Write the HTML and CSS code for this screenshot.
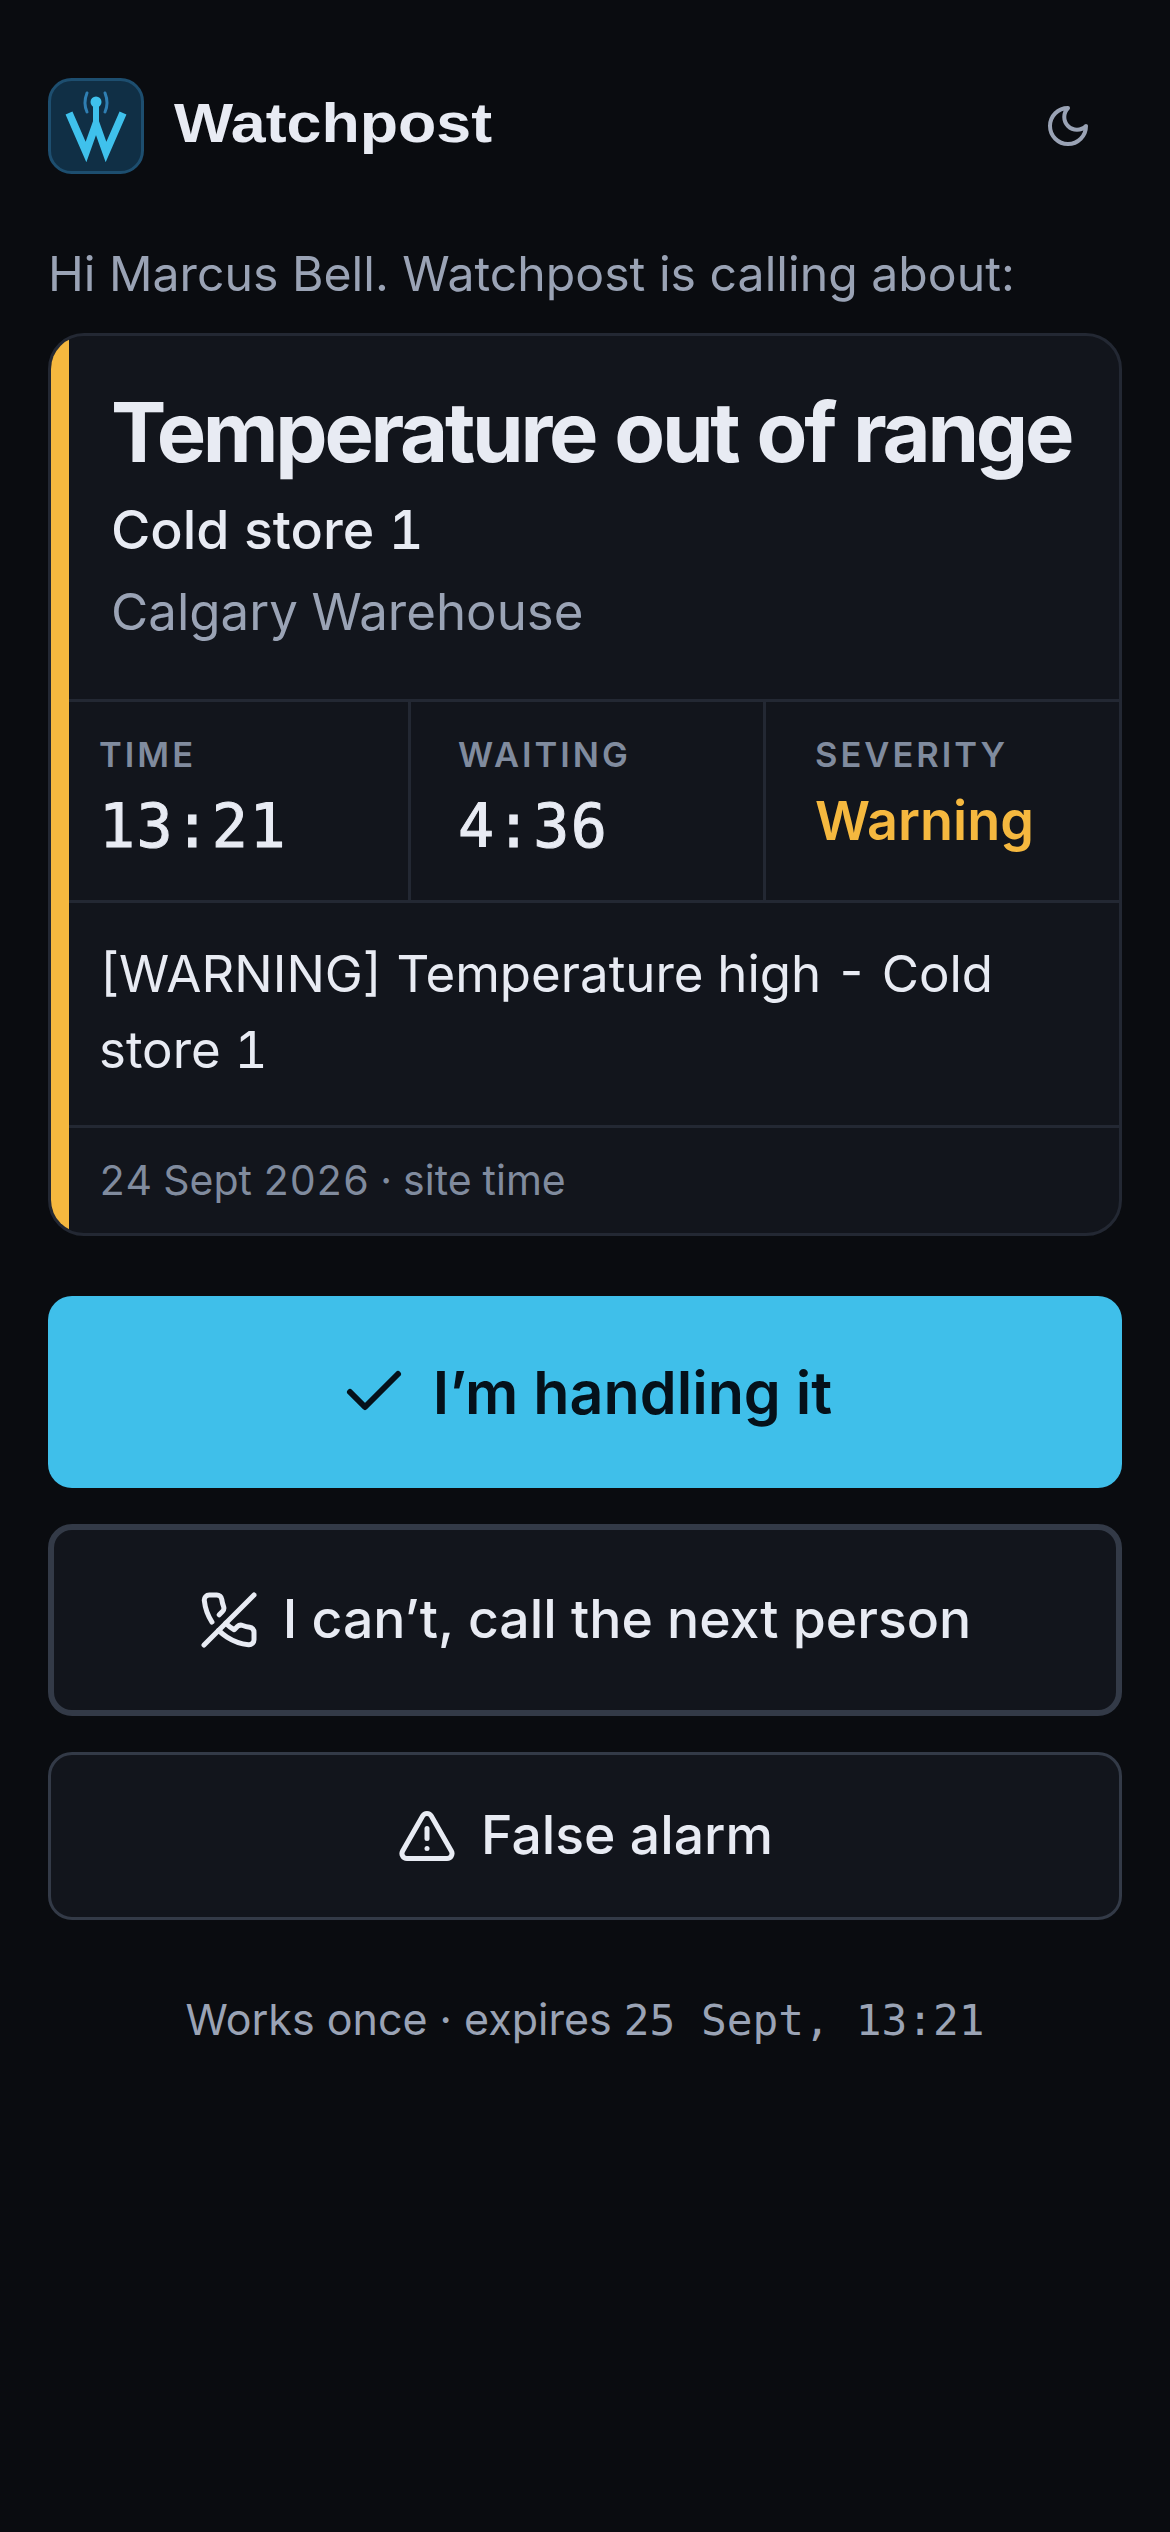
FILE: index.html
```html
<!DOCTYPE html>
<html lang="en">
<head>
  <meta charset="UTF-8">
  <meta name="viewport" content="width=device-width, initial-scale=1.0">
  <title>Watchpost</title>
  <link rel="stylesheet" href="styles.css">
</head>
<body>
  <div class="page">
    <!-- Header -->
    <header class="top">
      <div class="brand">
        <svg class="logo" viewBox="0 0 96 96">
          <rect x="1.5" y="1.5" width="93" height="93" rx="22" fill="#102f45" stroke="#1d4e6f" stroke-width="3"/>
          <path d="M39 15q-4 10 0 19M57 15q4 10 0 19" fill="none" stroke="#2f7fb3" stroke-width="3" stroke-linecap="round"/>
          <path d="M21 35 38 74 48 46 58 74 75 35" fill="none" stroke="#3fc1ec" stroke-width="7.5"/>
          <path d="M48 24v24" stroke="#3fc1ec" stroke-width="6"/>
          <circle cx="48" cy="24" r="5.5" fill="#3fc1ec"/>
        </svg>
        <span class="brand-name">Watchpost</span>
      </div>
      <button class="theme">
        <svg class="icon-moon" viewBox="0 0 24 24"><path d="M12 3a6 6 0 0 0 9 9 9 9 0 1 1-9-9Z"/></svg>
      </button>
    </header>

    <p class="intro">Hi Marcus Bell. Watchpost is calling about:</p>

    <!-- Alarm card -->
    <section class="card">
      <div class="card-bar"></div>
      <div class="card-body">
        <div class="card-head">
          <h1>Temperature out of range</h1>
          <p class="asset">Cold store 1</p>
          <p class="site">Calgary Warehouse</p>
        </div>
        <div class="stats">
          <div class="stat">
            <div class="stat-label">TIME</div>
            <div class="stat-value mono">13:21</div>
          </div>
          <div class="stat">
            <div class="stat-label">WAITING</div>
            <div class="stat-value mono">4:36</div>
          </div>
          <div class="stat">
            <div class="stat-label">SEVERITY</div>
            <div class="stat-value warning">Warning</div>
          </div>
        </div>
        <p class="message">[WARNING] Temperature high - Cold store 1</p>
        <p class="date">24 Sept 2026 · site time</p>
      </div>
    </section>

    <!-- Actions -->
    <button class="btn btn-primary">
      <svg class="icon-lg" viewBox="0 0 24 24"><path d="M20 6 9 17l-5-5"/></svg>
      I’m handling it
    </button>
    <button class="btn btn-next">
      <svg class="icon" viewBox="0 0 24 24"><path d="M10.68 13.31a16 16 0 0 0 3.41 2.6l1.27-1.27a2 2 0 0 1 2.11-.45 12.84 12.84 0 0 0 2.81.7 2 2 0 0 1 1.72 2v3a2 2 0 0 1-2.18 2 19.79 19.79 0 0 1-8.63-3.07 19.42 19.42 0 0 1-3.33-2.67m-2.67-3.34a19.79 19.79 0 0 1-3.07-8.63A2 2 0 0 1 4.11 2h3a2 2 0 0 1 2 1.72 12.84 12.84 0 0 0 .7 2.81 2 2 0 0 1-.45 2.11L8.09 9.91"/><path d="M22 2 2 22"/></svg>
      <span class="btn-text">I can’t, call the next person</span>
    </button>
    <button class="btn btn-false">
      <svg class="icon" viewBox="0 0 24 24"><path d="m21.73 18-8-14a2 2 0 0 0-3.48 0l-8 14A2 2 0 0 0 4 21h16a2 2 0 0 0 1.73-3"/><path d="M12 9v4"/><path d="M12 17h.01"/></svg>
      <span class="btn-text">False alarm</span>
    </button>

    <p class="expiry">Works once · expires <span class="mono-light">25 Sept, 13:21</span></p>
  </div>
</body>
</html>
```

FILE: styles.css
```css
/* General Styles */
html, body {
  margin: 0;
  padding: 0;
  background: #0a0c10;
}

body {
  font-family: 'Inter', sans-serif;
  color: #e8ebf3;
  min-height: 2532px;
}

p, h1 {
  margin: 0;
}

.page {
  display: flex;
  flex-direction: column;
  padding: 78px 48px 0;
}

svg {
  fill: none;
  stroke: currentColor;
  stroke-width: 2;
  stroke-linecap: round;
  stroke-linejoin: round;
  flex: none;
}

/* Header */
.top {
  display: flex;
  justify-content: space-between;
  align-items: center;
  height: 96px;
}

.brand {
  display: flex;
  align-items: center;
  gap: 30px;
}

.logo {
  width: 96px;
  height: 96px;
  stroke: none;
  stroke-linecap: butt;
  stroke-linejoin: miter;
}

.brand-name {
  display: inline-block;
  padding-bottom: 6px;
  font-family: 'Liberation Sans', sans-serif;
  font-weight: 700;
  font-size: 55px;
  line-height: 84px;
  color: #e8ebf3;
  transform: scaleX(1.14);
  transform-origin: left center;
}

.theme {
  display: flex;
  justify-content: center;
  align-items: center;
  width: 108px;
  height: 108px;
  padding: 0;
  border: none;
  background: none;
  color: #9aa3b5;
}

.icon-moon {
  width: 48px;
  height: 48px;
}

.intro {
  margin-top: 64px;
  font-size: 48.2px;
  line-height: 72px;
  color: #9aa3b5;
}

/* Card */
.card {
  display: flex;
  margin-top: 23px;
  background: #12151c;
  border: 3px solid #232833;
  border-radius: 36px;
  overflow: hidden;
}

.card-bar {
  flex: none;
  width: 18px;
  background: #f5b83f;
}

.card-body {
  flex: 1;
  min-width: 0;
  font-variant-numeric: tabular-nums;
}

.card-head {
  padding: 46px 0 51px 42px;
  border-bottom: 3px solid #232833;
}

.card-head h1 {
  font-size: 83px;
  font-weight: 700;
  line-height: 100px;
  letter-spacing: -3.25px;
  white-space: nowrap;
}

.asset {
  font-size: 53.7px;
  font-weight: 500;
  line-height: 72px;
  margin-top: 12px;
}

.site {
  font-size: 51px;
  line-height: 72px;
  margin-top: 10px;
  color: #9aa3b5;
}

.stats {
  display: grid;
  grid-template-columns: 339px 355px 1fr;
  height: 198px;
  border-bottom: 3px solid #232833;
}

.stat {
  padding: 31px 0 0 47px;
  border-left: 3px solid #232833;
}

.stat:first-child {
  padding-left: 30px;
  border-left: none;
}

.stat:last-child {
  padding-left: 49px;
}

.stat-label {
  font-size: 34.5px;
  line-height: 44px;
  font-weight: 600;
  letter-spacing: 3px;
  color: #808b9e;
}

.stat-value {
  margin-top: 13px;
  font-size: 54px;
  line-height: 72px;
  font-weight: 600;
}

.mono {
  font-family: 'DejaVu Sans Mono', monospace;
  font-size: 60px;
  font-weight: 400;
  letter-spacing: 1.5px;
  -webkit-text-stroke: 1px #e8ebf3;
}

.warning {
  margin-top: 8px;
  color: #f5b83f;
}

.message {
  padding: 33px 48px 37px 30px;
  font-size: 51px;
  line-height: 76px;
  border-bottom: 3px solid #232833;
}

.date {
  padding: 25px 30px 26px;
  font-size: 41px;
  line-height: 54px;
  color: #808b9e;
}

/* Button Styles */
.btn {
  display: flex;
  justify-content: center;
  align-items: center;
  height: 192px;
  margin-top: 36px;
  padding: 0;
  gap: 24px;
  font-family: 'Inter', sans-serif;
  font-size: 53.5px;
  font-weight: 500;
  color: #e8ebf3;
  background: #12151c;
  border: 3px solid #333a47;
  border-radius: 24px;
}

.btn-text {
  padding-bottom: 3px;
}

.btn-primary {
  margin-top: 60px;
  gap: 23px;
  font-size: 59.2px;
  font-weight: 600;
  color: #05111a;
  background: #3fbfea;
  border: none;
}

.btn-next {
  border-width: 6px;
}

.btn-false {
  height: 168px;
}

.icon-lg {
  width: 72px;
  height: 72px;
}

.icon {
  width: 60px;
  height: 60px;
}

.expiry {
  margin-top: 72px;
  text-align: center;
  font-size: 43px;
  line-height: 54px;
  color: #9aa3b5;
}

.mono-light {
  font-family: 'DejaVu Sans Mono', monospace;
  font-size: 42.8px;
}
```
